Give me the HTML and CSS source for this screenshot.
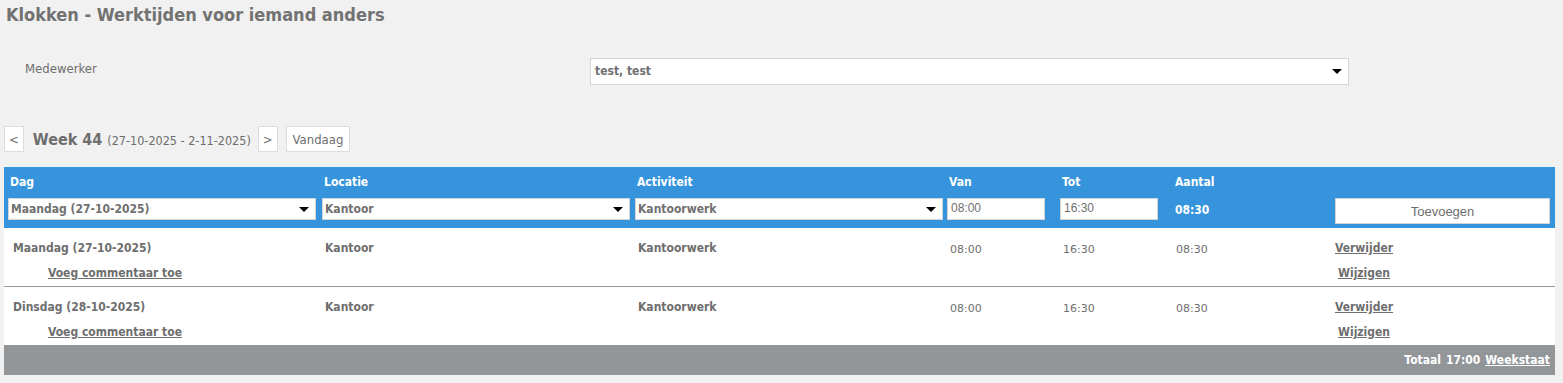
FILE: index.html
```html
<!DOCTYPE html>
<html lang="nl">
<head>
    <meta charset="UTF-8">
    <title>Klokken</title>
    <link rel="stylesheet" href="styles.css">
</head>
<body>
    <h1 class="titel">Klokken - Werktijden voor iemand anders</h1>

    <div class="medewerker">
        <label>Medewerker</label>
        <div class="keuze groot"><span>test, test</span><i class="pijl"></i></div>
    </div>

    <div class="weeknav">
        <button class="knop">&lt;</button>
        <h2>Week 44 <small>(27-10-2025 - 2-11-2025)</small></h2>
        <button class="knop">&gt;</button>
        <button class="knop vandaag">Vandaag</button>
    </div>

    <div class="tabel">
        <div class="kop">
            <div class="cel"><b>Dag</b><div class="keuze"><span>Maandag (27-10-2025)</span><i class="pijl"></i></div></div>
            <div class="cel"><b>Locatie</b><div class="keuze"><span>Kantoor</span><i class="pijl"></i></div></div>
            <div class="cel"><b>Activiteit</b><div class="keuze"><span>Kantoorwerk</span><i class="pijl"></i></div></div>
            <div class="cel"><b>Van</b><div class="tijd">08:00</div></div>
            <div class="cel"><b>Tot</b><div class="tijd">16:30</div></div>
            <div class="cel"><b>Aantal</b><div class="aantal">08:30</div></div>
            <div class="cel"><b>&nbsp;</b><button class="toevoegen">Toevoegen</button></div>
        </div>

        <div class="rij">
            <div class="cel dag">Maandag (27-10-2025)<a href="#">Voeg commentaar toe</a></div>
            <div class="cel">Kantoor</div>
            <div class="cel">Kantoorwerk</div>
            <div class="cel num">08:00</div>
            <div class="cel num">16:30</div>
            <div class="cel num">08:30</div>
            <div class="cel acties"><a href="#">Verwijder</a><a href="#">Wijzigen</a></div>
        </div>
        <div class="rij">
            <div class="cel dag">Dinsdag (28-10-2025)<a href="#">Voeg commentaar toe</a></div>
            <div class="cel">Kantoor</div>
            <div class="cel">Kantoorwerk</div>
            <div class="cel num">08:00</div>
            <div class="cel num">16:30</div>
            <div class="cel num">08:30</div>
            <div class="cel acties"><a href="#">Verwijder</a><a href="#">Wijzigen</a></div>
        </div>

        <div class="totaal">Totaal <b>17:00</b> <a href="#">Weekstaat</a></div>
    </div>
</body>
</html>
```

FILE: styles.css
```css
body {
    margin: 0;
    padding: 0 8px 8px 4px;
    background-color: #f1f1f1;
    color: #6e6e6e;
    font-family: "DejaVu Sans Condensed", "DejaVu Sans", sans-serif;
    font-size: 12px;
}
.titel {
    margin: 0;
    padding: 4px 0 0 2px;
    font-size: 18px;
    color: #727272;
    height: 32px;
}
.medewerker {
    display: flex;
    align-items: center;
    padding: 22px 0 0 21px;
    height: 26px;
}
.medewerker label {
    width: 565px;
    font-size: 13px;
    margin-top: -6px;
}
.keuze {
    display: flex;
    align-items: center;
    justify-content: space-between;
    background-color: #fff;
    border: 1px solid #d4d4d4;
    box-sizing: border-box;
    height: 22px;
    padding: 0 6px 0 2px;
    font-weight: bold;
    color: #707070;
}
.keuze.groot {
    width: 759px;
    height: 27px;
    padding: 0 6px 0 4px;
}
.pijl {
    width: 0;
    height: 0;
    border-left: 5px solid transparent;
    border-right: 5px solid transparent;
    border-top: 5px solid #000;
}
.weeknav {
    display: flex;
    align-items: center;
    margin-top: 42px;
    height: 26px;
}
.knop {
    height: 26px;
    min-width: 19px;
    margin-right: 8px;
    background-color: #fff;
    border: 1px solid #dcdcdc;
    padding: 0 4px;
    font-family: inherit;
    font-size: 13px;
    color: #6e6e6e;
}
.knop.vandaag {
    padding: 0 6px;
}
.weeknav h2 {
    margin: 0 7px 0 1px;
    font-size: 16px;
}
.weeknav small {
    font-size: 12.5px;
    font-weight: normal;
}
.tabel {
    margin-top: 15px;
    background-color: #fff;
}
.kop, .rij {
    display: grid;
    grid-template-columns: 314px 313px 312px 113px 113px 162px 1fr;
    padding-left: 4px;
}
.kop {
    background-color: #3594db;
    color: #fff;
    height: 61px;
    box-sizing: border-box;
    padding-top: 8px;
}
.kop b {
    display: block;
    padding-left: 2px;
    height: 23px;
}
.kop .keuze {
    width: 308px;
}
.tijd {
    width: 98px;
    height: 22px;
    box-sizing: border-box;
    background-color: #fff;
    border: 1px solid #d4d4d4;
    padding: 2px 3px;
    font-family: "Liberation Sans", Arial, sans-serif;
    font-size: 12px;
    color: #707070;
}
.aantal {
    font-weight: bold;
    padding: 5px 0 0 2px;
}
.toevoegen {
    width: 215px;
    height: 26px;
    background-color: #fff;
    border: 1px solid #d4d4d4;
    font-family: "Liberation Sans", Arial, sans-serif;
    font-size: 13px;
    color: #6e6e6e;
}
.rij {
    height: 59px;
    box-sizing: border-box;
    border-bottom: 1px solid #999;
    padding-top: 13px;
    font-weight: bold;
}
.rij + .rij {
    border-bottom: none;
    height: 58px;
}
.rij .cel {
    padding-left: 3px;
}
.rij .dag {
    padding-left: 5px;
}
a {
    color: #6e6e6e;
}
.dag a {
    display: block;
    margin: 11px 0 0 35px;
}
.num {
    font-family: "DejaVu Sans", sans-serif;
    font-weight: normal;
    font-size: 11px;
    padding-top: 2px;
}
.rij .acties {
    display: flex;
    flex-direction: column;
    align-items: center;
    width: max-content;
    padding-left: 0;
    gap: 11px;
}
.totaal {
    background-color: #939699;
    color: #fff;
    height: 30px;
    display: flex;
    justify-content: flex-end;
    align-items: center;
    gap: 5px;
    padding-right: 5px;
    font-weight: bold;
}
.totaal a {
    color: #fff;
}
```
